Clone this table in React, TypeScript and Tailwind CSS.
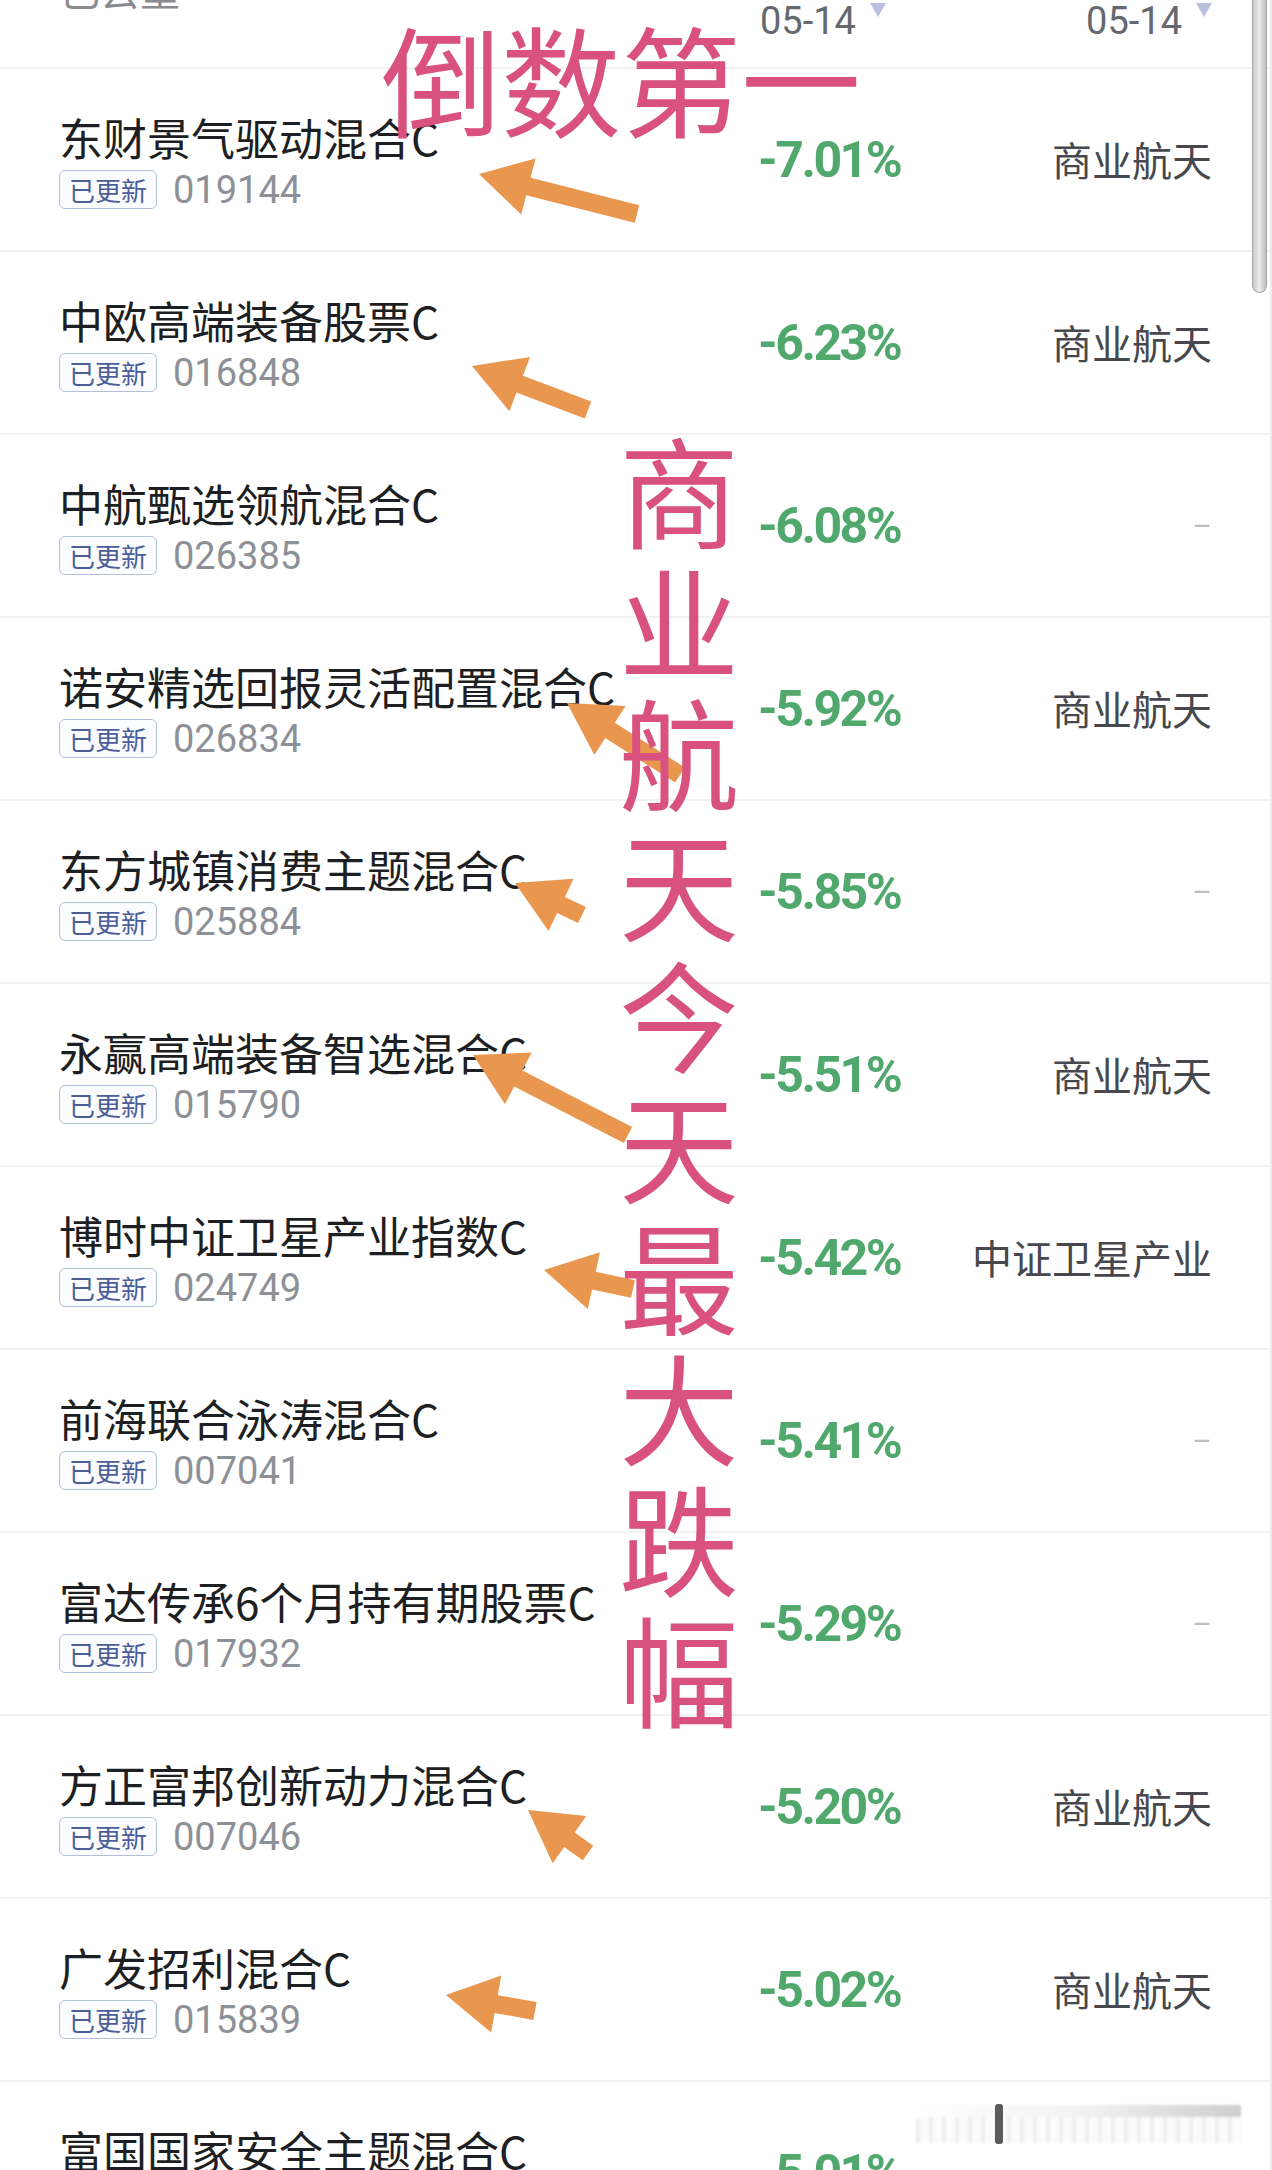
import React from "react";

type Fund = { name: string; code: string; pct: string; sector?: string };

const FUNDS: Fund[] = [
  { name: "东财景气驱动混合C", code: "019144", pct: "-7.01%", sector: "商业航天" },
  { name: "中欧高端装备股票C", code: "016848", pct: "-6.23%", sector: "商业航天" },
  { name: "中航甄选领航混合C", code: "026385", pct: "-6.08%" },
  { name: "诺安精选回报灵活配置混合C", code: "026834", pct: "-5.92%", sector: "商业航天" },
  { name: "东方城镇消费主题混合C", code: "025884", pct: "-5.85%" },
  { name: "永赢高端装备智选混合C", code: "015790", pct: "-5.51%", sector: "商业航天" },
  { name: "博时中证卫星产业指数C", code: "024749", pct: "-5.42%", sector: "中证卫星产业" },
  { name: "前海联合泳涛混合C", code: "007041", pct: "-5.41%" },
  { name: "富达传承6个月持有期股票C", code: "017932", pct: "-5.29%" },
  { name: "方正富邦创新动力混合C", code: "007046", pct: "-5.20%", sector: "商业航天" },
  { name: "广发招利混合C", code: "015839", pct: "-5.02%", sector: "商业航天" },
  { name: "富国国家安全主题混合C", code: "", pct: "-5.01%" },
];

// tip x,y -> tail x,y
const ARROWS: [number, number, number, number][] = [
  [479, 174, 637, 214],
  [472, 366, 588, 410],
  [567, 703, 680, 775],
  [515, 883, 582, 915],
  [473, 1055, 628, 1135],
  [544, 1270, 633, 1289],
  [528, 1810, 588, 1853],
  [446, 1995, 535, 2011],
];

function arrowPoints([tx, ty, ex, ey]: [number, number, number, number]) {
  const len = Math.hypot(tx - ex, ty - ey);
  const ux = (tx - ex) / len;
  const uy = (ty - ey) / len;
  const nx = -uy;
  const ny = ux;
  const L = 51;
  const H = 29;
  const S = 9;
  const bx = tx - ux * L;
  const by = ty - uy * L;
  const pts = [
    [tx, ty],
    [bx + nx * H, by + ny * H],
    [bx + nx * S, by + ny * S],
    [ex + nx * S, ey + ny * S],
    [ex - nx * S, ey - ny * S],
    [bx - nx * S, by - ny * S],
    [bx - nx * H, by - ny * H],
  ];
  return pts.map((p) => p.map((v) => v.toFixed(1)).join(",")).join(" ");
}

function Caret() {
  return (
    <svg width="16" height="14" viewBox="0 0 16 14" className="ml-[14px] mt-[3px] shrink-0">
      <polygon points="0,0 16,0 8,14" fill="#b9c1de" />
    </svg>
  );
}

function FundRow({ fund }: { fund: Fund }) {
  return (
    <div className="flex h-[183px] items-center border-b-2 border-[#f2f2f2] pl-[59px] pr-[58px]">
      <div className="w-[699px] shrink-0 pt-[2px]">
        <div className="whitespace-nowrap text-[44px] leading-[50px] text-[#1e1f22]">{fund.name}</div>
        <div className="mt-[8px] flex items-center gap-[16px]">
          <span className="flex h-[39px] items-center rounded-[6px] border-[1.5px] border-[#b3c0dc] bg-[#fbfcff] px-[9px] text-[26px] leading-none text-[#4b5e98]">
            已更新
          </span>
          <span className="font-['Roboto',sans-serif] text-[38px] leading-none text-[#8d9096]">
            {fund.code}
          </span>
        </div>
      </div>
      <div className="w-[190px] shrink-0 whitespace-nowrap font-['Roboto',sans-serif] text-[50px] font-bold leading-none tracking-[-2.5px] text-[#51a86d]">
        {fund.pct}
      </div>
      <div className="min-w-0 flex-1 whitespace-nowrap text-right">
        {fund.sector ? (
          <span className="text-[40px] leading-none text-[#46484e]">{fund.sector}</span>
        ) : (
          <span className="font-['Roboto',sans-serif] text-[30px] leading-none text-[#bdbfc4]">–</span>
        )}
      </div>
    </div>
  );
}

export default function App() {
  return (
    <div className="relative h-[2170px] w-[1272px] overflow-hidden border-r-2 border-[#ececec] bg-white font-['Noto_Sans_CJK_SC','Noto_Sans',sans-serif]">
      {/* header */}
      <div className="flex h-[69px] items-start overflow-hidden border-b-2 border-[#f2f2f2] pl-[60px] pr-[58px]">
        <div className="-mt-[31px] w-[700px] shrink-0 text-[40px] leading-[40px] text-[#8a8b8f]">已去重</div>
        <div className="flex items-start">
          <span className="mt-[2px] font-['Roboto',sans-serif] text-[38px] leading-none text-[#65686e]">05-14</span>
          <Caret />
        </div>
        <div className="flex flex-1 items-start justify-end">
          <span className="mt-[2px] font-['Roboto',sans-serif] text-[38px] leading-none text-[#65686e]">05-14</span>
          <Caret />
        </div>
      </div>

      {FUNDS.map((f) => (
        <FundRow key={f.name} fund={f} />
      ))}

      {/* scrollbar */}
      <div className="absolute right-[3px] top-0 h-[293px] w-[15px] rounded-b-full border border-t-0 border-[#a9a9a9] bg-gradient-to-r from-[#c9c9c9] via-[#ececec] to-[#bcbcbc]" />

      {/* blurred overlay at bottom */}
      <div className="absolute left-[916px] top-[2105px] h-[38px] w-[325px] opacity-50 blur-[1px]">
        <div className="h-[12px] bg-gradient-to-r from-[#ffffff] via-[#e8e8e8] to-[#a0a0a0]" />
        <div className="h-[26px] bg-[repeating-linear-gradient(90deg,#e0e0e0_0px,#e0e0e0_4px,#f8f8f8_4px,#f8f8f8_13px)]" />
      </div>
      <div className="absolute left-[995px] top-[2104px] h-[40px] w-[8px] rounded-[3px] bg-[#5a5a5a] blur-[0.5px]" />

      {/* annotations */}
      <svg className="pointer-events-none absolute left-0 top-0" width="1272" height="2170">
        {ARROWS.map((a, i) => (
          <polygon key={i} points={arrowPoints(a)} fill="#e9964f" />
        ))}
      </svg>

      <div className="absolute left-[381px] top-[17px] whitespace-nowrap text-[120px] font-normal leading-[120px] text-[#d9517f]">
        倒数第一
      </div>
      <div className="absolute left-[619px] top-[423px] w-[120px] break-all text-[120px] font-normal leading-[131px] text-[#d9517f]">
        商业航天今天最大跌幅
      </div>
    </div>
  );
}
